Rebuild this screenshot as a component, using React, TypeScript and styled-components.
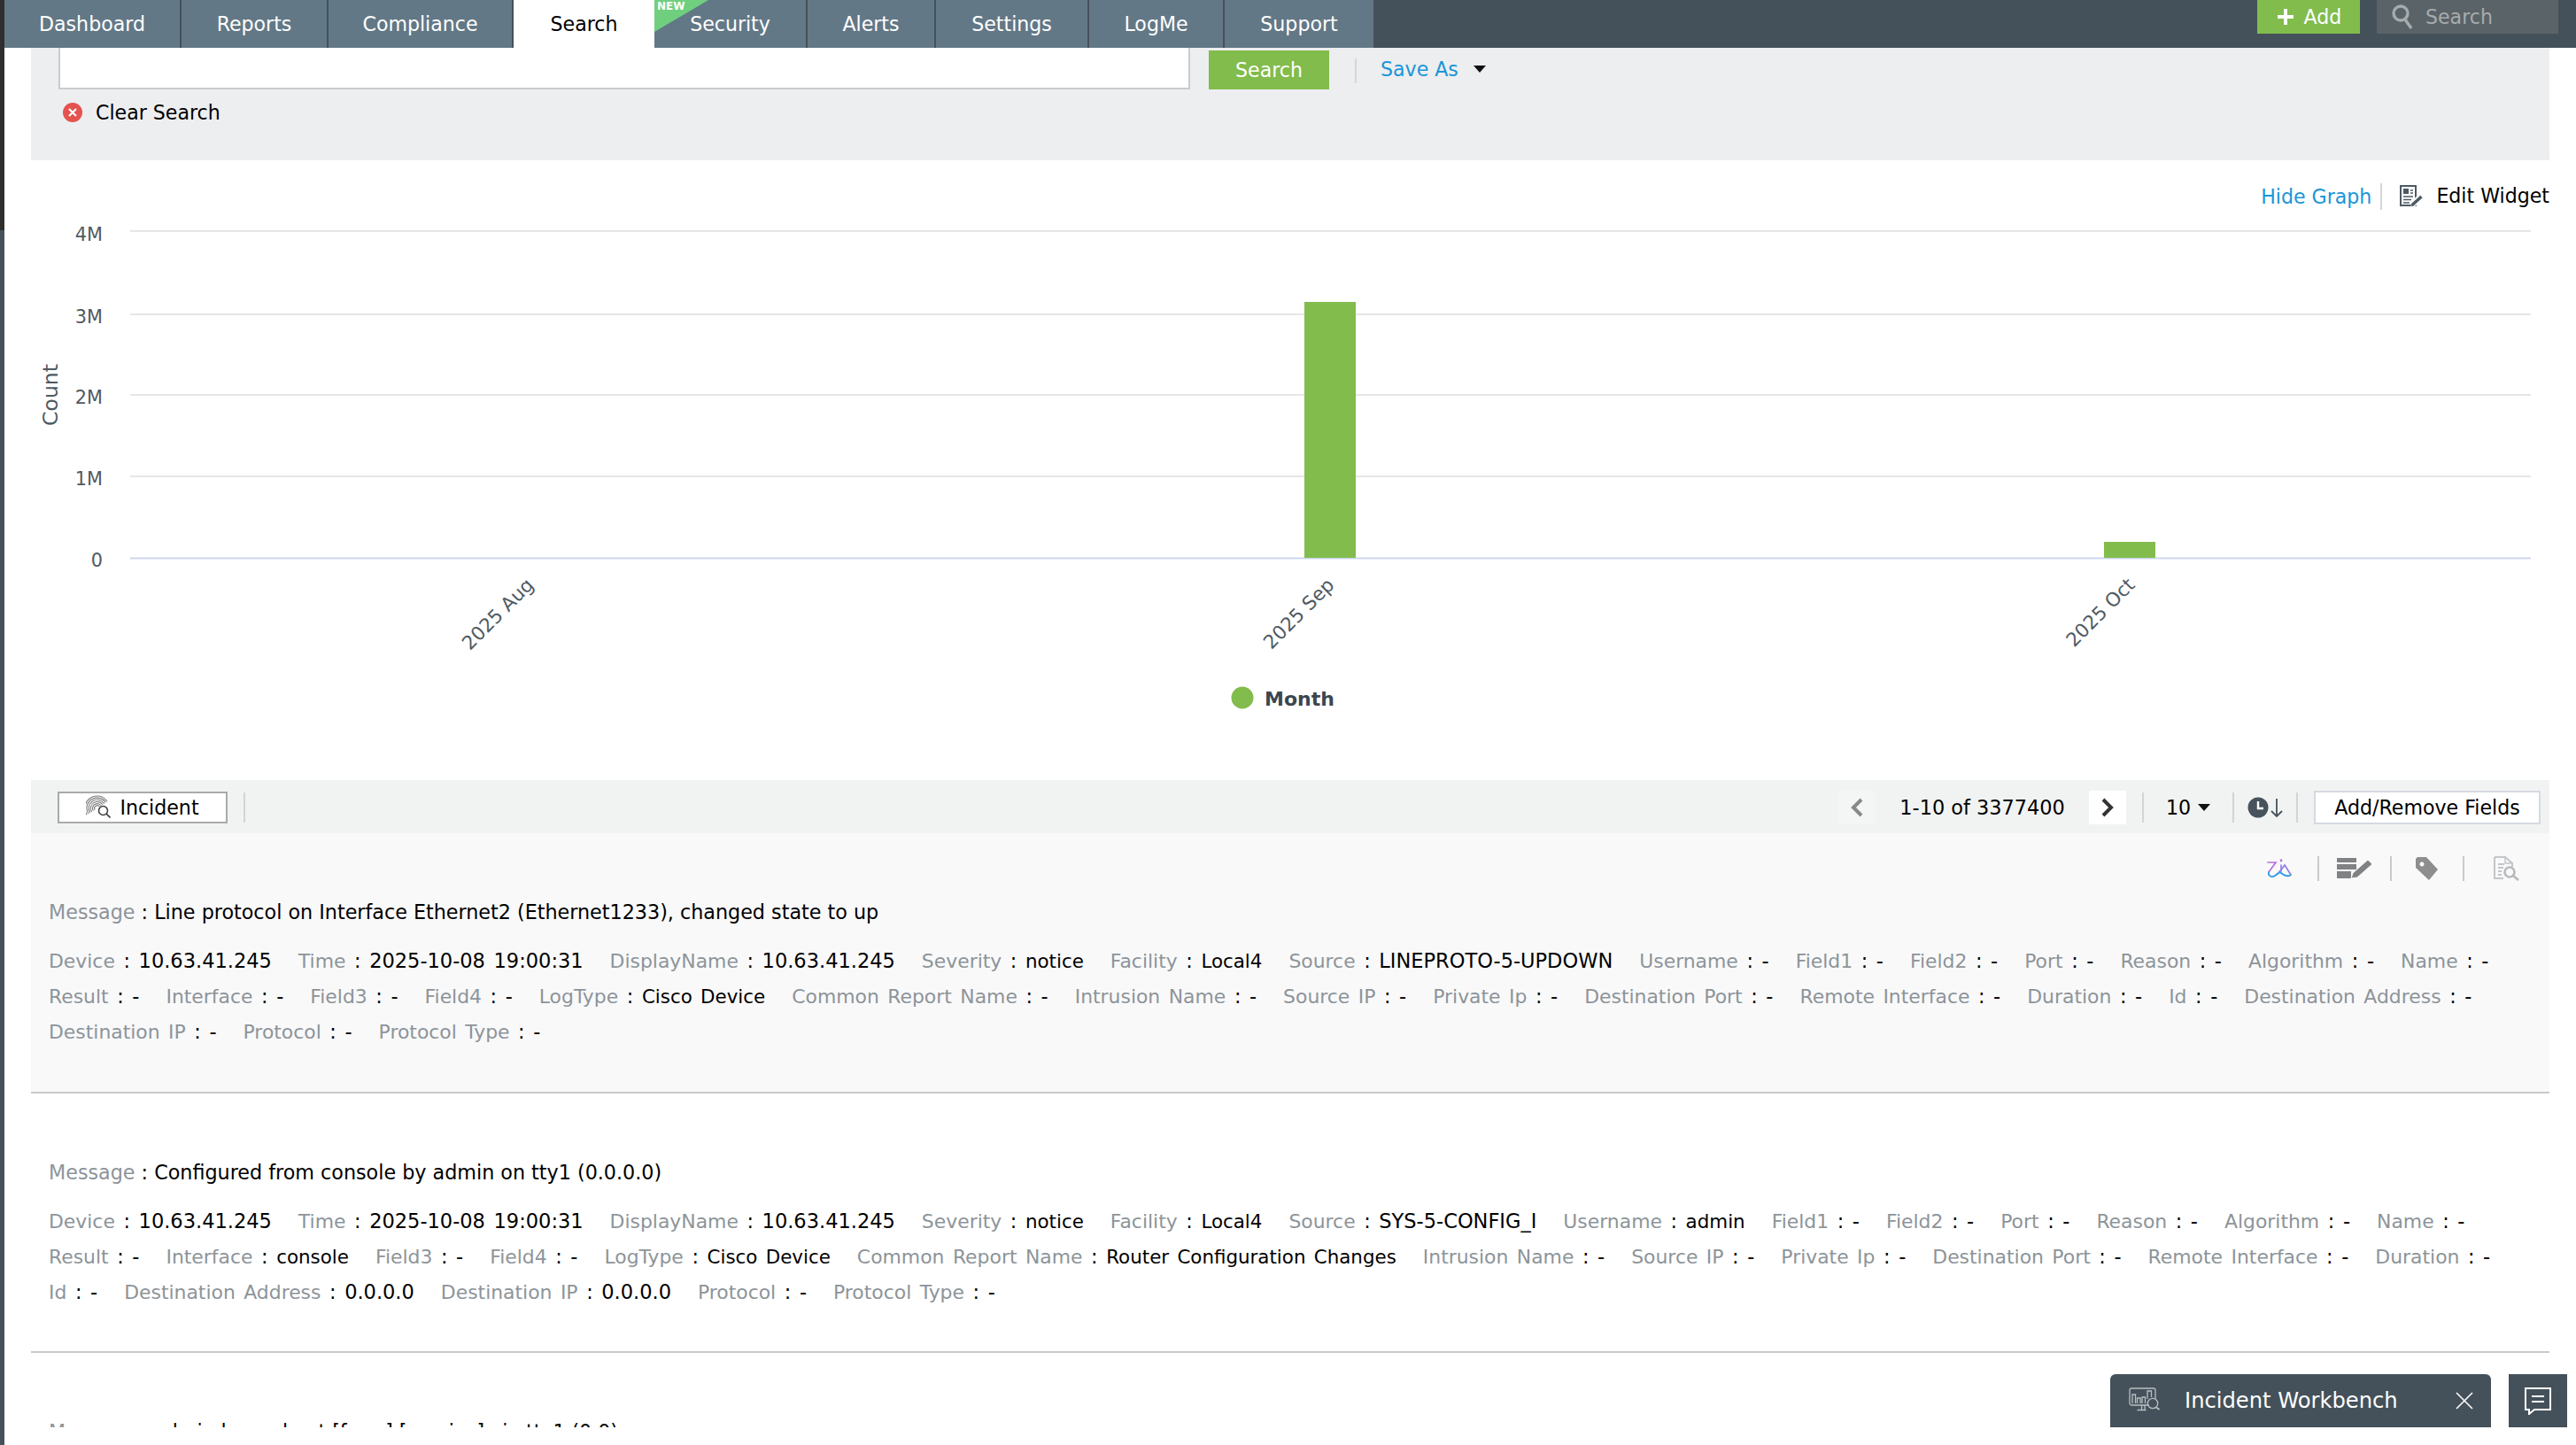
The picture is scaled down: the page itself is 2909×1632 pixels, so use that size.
import React from "react";
import styled, { createGlobalStyle } from "styled-components";

const uiFont = `"DejaVu Sans", "Liberation Sans", sans-serif`;

const GlobalStyle = createGlobalStyle`
  html, body {
    margin: 0;
    padding: 0;
    height: 100%;
    overflow: hidden;
    background: #ffffff;
  }
  body {
    font-family: ${uiFont};
    font-size: 22.1px;
    color: #000;
  }
`;

const tabs = [
  { name: "Dashboard", width: 200 },
  { name: "Reports", width: 166 },
  { name: "Compliance", width: 209 },
  { name: "Search", width: 159, active: true },
  { name: "Security", width: 173, isNew: true },
  { name: "Alerts", width: 145 },
  { name: "Settings", width: 173 },
  { name: "LogMe", width: 153 },
  { name: "Support", width: 170 },
];

type FieldData = [string, string];

const recordOne: { message: string; rows: FieldData[][] } = {
  message: "Line protocol on Interface Ethernet2 (Ethernet1233), changed state to up",
  rows: [
    [
      ["Device", "10.63.41.245"],
      ["Time", "2025-10-08 19:00:31"],
      ["DisplayName", "10.63.41.245"],
      ["Severity", "notice"],
      ["Facility", "Local4"],
      ["Source", "LINEPROTO-5-UPDOWN"],
      ["Username", "-"],
      ["Field1", "-"],
      ["Field2", "-"],
      ["Port", "-"],
      ["Reason", "-"],
      ["Algorithm", "-"],
      ["Name", "-"],
    ],
    [
      ["Result", "-"],
      ["Interface", "-"],
      ["Field3", "-"],
      ["Field4", "-"],
      ["LogType", "Cisco Device"],
      ["Common Report Name", "-"],
      ["Intrusion Name", "-"],
      ["Source IP", "-"],
      ["Private Ip", "-"],
      ["Destination Port", "-"],
      ["Remote Interface", "-"],
      ["Duration", "-"],
      ["Id", "-"],
      ["Destination Address", "-"],
    ],
    [
      ["Destination IP", "-"],
      ["Protocol", "-"],
      ["Protocol Type", "-"],
    ],
  ],
};

const recordTwo: { message: string; rows: FieldData[][] } = {
  message: "Configured from console by admin on tty1 (0.0.0.0)",
  rows: [
    [
      ["Device", "10.63.41.245"],
      ["Time", "2025-10-08 19:00:31"],
      ["DisplayName", "10.63.41.245"],
      ["Severity", "notice"],
      ["Facility", "Local4"],
      ["Source", "SYS-5-CONFIG_I"],
      ["Username", "admin"],
      ["Field1", "-"],
      ["Field2", "-"],
      ["Port", "-"],
      ["Reason", "-"],
      ["Algorithm", "-"],
      ["Name", "-"],
    ],
    [
      ["Result", "-"],
      ["Interface", "console"],
      ["Field3", "-"],
      ["Field4", "-"],
      ["LogType", "Cisco Device"],
      ["Common Report Name", "Router Configuration Changes"],
      ["Intrusion Name", "-"],
      ["Source IP", "-"],
      ["Private Ip", "-"],
      ["Destination Port", "-"],
      ["Remote Interface", "-"],
      ["Duration", "-"],
    ],
    [
      ["Id", "-"],
      ["Destination Address", "0.0.0.0"],
      ["Destination IP", "0.0.0.0"],
      ["Protocol", "-"],
      ["Protocol Type", "-"],
    ],
  ],
};

const FingerprintIcon = () => (
  <svg width="28" height="27" viewBox="0 0 28 27" fill="none">
    {[13, 11, 9, 7, 5, 3].map((r) => (
      <path
        key={r}
        d={`M${13 - r * 0.92} ${15 + r * 0.55}A${r} ${r} 0 0 1 ${13 + r * 0.85} ${15 - r * 0.6}`}
        stroke="#7a7a7a"
        strokeWidth="1.1"
      />
    ))}
    <circle cx="19.5" cy="17.5" r="5" fill="#fff" stroke="#3c3c3c" strokeWidth="1.5" />
    <path d="M23 21l4.5 4.5" stroke="#3c3c3c" strokeWidth="1.7" />
  </svg>
);

const EditWidgetIcon = () => (
  <svg width="27" height="25" viewBox="0 0 27 25" fill="none">
    <rect x="1" y="1" width="17" height="22" stroke="#4d5a63" strokeWidth="2" />
    <rect x="4" y="4" width="6" height="6" fill="#4d5a63" />
    <path d="M12 6h3M12 9h3M4 13h11M4 16.5h9M4 20h7" stroke="#4d5a63" strokeWidth="1.7" />
    <path d="M13 23l11-10" stroke="#fff" strokeWidth="7" />
    <path d="M13.5 23l11-10" stroke="#4d5a63" strokeWidth="3.6" />
  </svg>
);

const ClockIcon = () => (
  <ClockSlot>
    <svg width="40" height="26" viewBox="0 0 40 26">
      <circle cx="12" cy="13" r="11.5" fill="#47535c" />
      <path d="M12 6v8h6" fill="none" stroke="#fff" strokeWidth="2.4" />
      <path d="M33 3v20M27 17l6 6 6-6" fill="none" stroke="#47535c" strokeWidth="1.8" />
    </svg>
  </ClockSlot>
);

const ZiaIcon = () => (
  <svg width="29" height="22" viewBox="0 0 29 22" fill="none" strokeWidth="1.7" strokeLinecap="round">
    <path d="M1 4h9L2 15" stroke="#b56ee4" />
    <path d="M16 1.5v.6" stroke="#b56ee4" strokeWidth="2.6" />
    <path d="M16 7v7" stroke="#a07ce4" />
    <path d="M2 15c-1 3 2 6 5 5 5-2 9-7 13-13 2 3 5 8 7 11-3 3-7 1-11-2" stroke="#8a82e6" />
    <path d="M2 15c-1 3 2 6 5 5 3-1 5-3 8-5M27 18c-3 3-7 1-11-2" stroke="#2ea6e4" />
  </svg>
);

const NotesIcon = () => (
  <svg width="40" height="27" viewBox="0 0 40 27" fill="#808283">
    <rect x="0" y="1" width="22" height="5" />
    <rect x="0" y="8" width="22" height="6" />
    <rect x="0" y="16" width="16" height="8" />
    <path d="M16 24l2-6 17-15 5 5-17 15z" stroke="#f9f9fa" strokeWidth="1" />
  </svg>
);

const TagIcon = () => (
  <svg width="27" height="28" viewBox="0 0 27 28">
    <path
      fillRule="evenodd"
      fill="#8e8e8e"
      d="M3 1h10l13 14-10 12L1 13V3zM8 6.5a2.5 2.5 0 1 0 .01 0z"
    />
  </svg>
);

const DocSearchIcon = () => (
  <svg width="30" height="28" viewBox="0 0 30 28" fill="none" stroke="#c4c6c8" strokeWidth="2">
    <path d="M1 1h12l8 7v4M1 1v24h10" />
    <path d="M13 1v7h8" strokeWidth="1.4" />
    <path d="M5 9h7M5 13h6M5 17h4M5 21h4" />
    <circle cx="18" cy="18" r="5.5" stroke="#b8bbbe" strokeWidth="2.6" />
    <path d="M22 22l6 5" stroke="#b8bbbe" strokeWidth="2.8" />
  </svg>
);

const WorkbenchIcon = () => (
  <svg width="37" height="30" viewBox="0 0 37 30" fill="none" stroke="#b9bec2" strokeWidth="1.3">
    <path d="M23 20H3a2 2 0 0 1-2-2V3a2 2 0 0 1 2-2h25a2 2 0 0 1 2 2v10" />
    <path d="M4 18V8h3.5v10M9.5 18v-6H13v6M15 18v-7h3.5v7M21 13V4h4.5v7" />
    <path d="M14.5 20v5M18 20v5M9.5 25.5h10" />
    <circle cx="27" cy="18" r="5.7" />
    <path d="M31 22.5l3.5 2.5" strokeWidth="2" />
  </svg>
);

const ChatIcon = () => (
  <svg width="30" height="31" viewBox="0 0 30 31" fill="none" stroke="#fff" strokeWidth="2">
    <path d="M1 1h28v24H11l-6 5v-5H1z" />
    <path d="M8 10h14M8 16h14" strokeWidth="2.2" />
  </svg>
);

const Chart = () => (
  <ChartSvg viewBox="5 240 2874 641">
    {[261, 355, 446, 538].map((y) => (
      <line key={y} x1="147" x2="2858" y1={y} y2={y} stroke="#e6e6e6" strokeWidth="2" />
    ))}
    <line x1="147" x2="2858" y1="630.5" y2="630.5" stroke="#ccd6eb" strokeWidth="2" />
    {[
      ["4M", 272],
      ["3M", 365],
      ["2M", 456],
      ["1M", 548],
      ["0", 640],
    ].map(([t, y]) => (
      <AxisText key={t} x="116" y={y} textAnchor="end">
        {t}
      </AxisText>
    ))}
    <CountText transform="translate(65 446) rotate(-90)" textAnchor="middle">
      Count
    </CountText>
    <rect x="1473" y="341" width="58" height="289" fill="#82bc4c" />
    <rect x="2376" y="612" width="58" height="18" fill="#82bc4c" />
    <AxisLabel transform="translate(604 662) rotate(-45)" textAnchor="end">
      2025 Aug
    </AxisLabel>
    <AxisLabel transform="translate(1508 662) rotate(-45)" textAnchor="end">
      2025 Sep
    </AxisLabel>
    <AxisLabel transform="translate(2412 662) rotate(-45)" textAnchor="end">
      2025 Oct
    </AxisLabel>
    <circle cx="1403" cy="788" r="12.5" fill="#82bc4c" />
    <LegendText x="1428" y="797">
      Month
    </LegendText>
  </ChartSvg>
);

const Record = ({ data, shaded }: { data: typeof recordOne; shaded?: boolean }) => (
  <RecordBox $shaded={shaded}>
    {shaded && (
      <RecordTools>
        <ZiaIcon />
        <ToolDivider $before={28} $after={20} />
        <NotesIcon />
        <ToolDivider $before={20} $after={26} />
        <TagIcon />
        <ToolDivider $before={27} $after={33} />
        <DocSearchIcon />
      </RecordTools>
    )}
    <MessageLine>
      <Label>Message</Label> : {data.message}
    </MessageLine>
    {data.rows.map((row, i) => (
      <FieldRow key={i}>
        {row.map(([k, v]) => (
          <span key={k}>
            <FieldLabel>{k}</FieldLabel> : <FieldValue $words={/[a-z]/.test(v)}>{v}</FieldValue>
          </span>
        ))}
      </FieldRow>
    ))}
  </RecordBox>
);

const App = () => {
  return (
    <Shell>
      <GlobalStyle />
      <LeftStrip />
      <Main>
        <TopBar>
          {tabs.map((t) => (
            <Tab key={t.name} $width={t.width} $active={t.active}>
              {t.isNew && (
                <NewBadge>
                  <NewText>NEW</NewText>
                </NewBadge>
              )}
              {t.name}
            </Tab>
          ))}
          <TopRight>
            <AddButton>
              <svg width="18" height="18" viewBox="0 0 18 18" stroke="#fff" strokeWidth="4">
                <path d="M9 0v18M0 9h18" />
              </svg>
              Add
            </AddButton>
            <TopSearch>
              <svg width="26" height="28" viewBox="0 0 26 28" fill="none" stroke="#a6abae" strokeWidth="3.4">
                <circle cx="11" cy="10" r="8" />
                <path d="M16 17l7 10" />
              </svg>
              Search
            </TopSearch>
          </TopRight>
        </TopBar>

        <Page>
          <SearchPanel>
            <SearchRow>
              <SearchInput />
              <SearchButton>Search</SearchButton>
              <SaveAs>
                Save As <Caret />
              </SaveAs>
            </SearchRow>
            <ClearRow>
              <ClearIcon>
                <svg width="12" height="12" viewBox="0 0 12 12" stroke="#fff" strokeWidth="2.2">
                  <path d="M2 2l8 8M10 2l-8 8" />
                </svg>
              </ClearIcon>
              Clear Search
            </ClearRow>
          </SearchPanel>

          <ChartSection>
            <ChartTools>
              <HideGraph>Hide Graph</HideGraph>
              <EditWidget>
                <EditWidgetIcon />
                Edit Widget
              </EditWidget>
            </ChartTools>
            <Chart />
          </ChartSection>

          <Toolbar>
            <IncidentButton>
              <FingerprintIcon />
              Incident
            </IncidentButton>
            <BarDivider />
            <Pager>
              <PagerButton $disabled>
                <svg width="14" height="22" viewBox="0 0 14 22" fill="none" stroke="#888" strokeWidth="4">
                  <path d="M12 2L3 11l9 9" />
                </svg>
              </PagerButton>
              <PageInfo>1-10 of 3377400</PageInfo>
              <PagerButton>
                <svg width="14" height="22" viewBox="0 0 14 22" fill="none" stroke="#333" strokeWidth="4">
                  <path d="M2 2l9 9-9 9" />
                </svg>
              </PagerButton>
              <BarDivider />
              <PageSize>
                10 <Caret />
              </PageSize>
              <BarDivider />
              <ClockIcon />
              <BarDivider />
              <FieldsButton>Add/Remove Fields</FieldsButton>
            </Pager>
          </Toolbar>

          <Record data={recordOne} shaded />
          <Record data={recordTwo} />
          <NextMessage>
            <Label>Message</Label> : admin logged out [from] [service] via tty1 (0.0)
          </NextMessage>
        </Page>

        <Dock>
          <Workbench>
            <WorkbenchIcon />
            <WorkbenchTitle>Incident Workbench</WorkbenchTitle>
            <svg width="20" height="20" viewBox="0 0 20 20" stroke="#fff" strokeWidth="1.6">
              <path d="M1 1l18 18M19 1L1 19" />
            </svg>
          </Workbench>
          <ChatButton>
            <ChatIcon />
          </ChatButton>
        </Dock>
      </Main>
    </Shell>
  );
};

export default App;

const Shell = styled.div`
  display: flex;
  width: 2909px;
  height: 1632px;
  overflow: hidden;
  background: #fff;
`;
const LeftStrip = styled.div`
  width: 5px;
  flex-shrink: 0;
  background: linear-gradient(#2e2e2e 0 260px, #44515a 260px);
`;
const Main = styled.div`
  position: relative;
  flex: 1;
  min-width: 0;
  display: flex;
  flex-direction: column;
`;
const TopBar = styled.div`
  height: 54px;
  flex-shrink: 0;
  display: flex;
  background: #44515a;
`;
const Tab = styled.div<{ $width: number; $active?: boolean }>`
  position: relative;
  width: ${(p) => p.$width}px;
  box-sizing: border-box;
  display: flex;
  align-items: center;
  justify-content: center;
  color: ${(p) => (p.$active ? "#000" : "#fff")};
  background: ${(p) => (p.$active ? "#fff" : "#637886")};
  border-right: ${(p) => (p.$active ? "none" : "2px solid #44515a")};
`;
const NewBadge = styled.span`
  position: absolute;
  left: 0;
  top: 0;
  width: 61px;
  height: 36px;
  background: #6fcf7f;
  clip-path: polygon(0 0, 100% 0, 0 100%);
`;
const NewText = styled.span`
  position: absolute;
  left: 3px;
  top: 0;
  font-size: 12px;
  line-height: 15px;
  font-weight: bold;
  color: #fff;
`;
const TopRight = styled.div`
  margin-left: auto;
  margin-right: 20px;
  display: flex;
  gap: 19px;
`;
const AddButton = styled.div`
  width: 116px;
  height: 38px;
  padding-left: 2px;
  box-sizing: border-box;
  display: flex;
  align-items: center;
  justify-content: center;
  gap: 12px;
  background: #82bc4c;
  color: #fff;
`;
const TopSearch = styled.div`
  width: 205px;
  height: 38px;
  padding-left: 16px;
  box-sizing: border-box;
  display: flex;
  align-items: center;
  gap: 13px;
  background: #5a6367;
  color: #a6abae;
`;
const Page = styled.div`
  height: 1558px;
  overflow: hidden;
`;
const SearchPanel = styled.div`
  margin-left: 30px;
  width: 2844px;
  height: 127px;
  background: #edeef0;
`;
const SearchRow = styled.div`
  display: flex;
  align-items: flex-start;
  padding-left: 31px;
`;
const SearchInput = styled.div`
  width: 1278px;
  height: 47px;
  box-sizing: border-box;
  background: #fff;
  border: 2px solid #c8ccd0;
  border-top: none;
`;
const SearchButton = styled.div`
  width: 136px;
  height: 44px;
  margin: 3px 0 0 21px;
  display: flex;
  align-items: center;
  justify-content: center;
  background: #82bc4c;
  color: #fff;
`;
const SaveAs = styled.div`
  margin: 12px 0 0 29px;
  padding: 0 0 5px 27px;
  height: 28px;
  box-sizing: border-box;
  border-left: 2px solid #d4d6d8;
  color: #1a96d8;
  display: flex;
  align-items: center;
  gap: 17px;
`;
const Caret = styled.span`
  display: inline-block;
  width: 0;
  height: 0;
  border-left: 7px solid transparent;
  border-right: 7px solid transparent;
  border-top: 8px solid #111;
`;
const ClearRow = styled.div`
  margin: 13px 0 0 36px;
  display: flex;
  align-items: center;
  gap: 15px;
`;
const ClearIcon = styled.span`
  width: 22px;
  height: 22px;
  border-radius: 50%;
  background: #e4534f;
  display: flex;
  align-items: center;
  justify-content: center;
`;
const ChartSection = styled.div`
  height: 700px;
  display: flex;
  flex-direction: column;
`;
const ChartTools = styled.div`
  height: 59px;
  flex-shrink: 0;
  box-sizing: border-box;
  padding: 26px 30px 0 0;
  display: flex;
  justify-content: flex-end;
  align-items: flex-start;
`;
const HideGraph = styled.div`
  height: 30px;
  line-height: 30px;
  padding-right: 10px;
  border-right: 2px solid #d4d6d8;
  color: #1a96d8;
`;
const EditWidget = styled.div`
  margin-left: 20px;
  height: 28px;
  display: flex;
  align-items: center;
  gap: 14px;
`;
const ChartSvg = styled.svg`
  display: block;
  width: 2874px;
  height: 641px;
`;
const AxisText = styled.text`
  font-family: ${uiFont};
  font-size: 20.8px;
  fill: #4f5a62;
`;
const AxisLabel = styled(AxisText)`
  font-size: 21.5px;
`;
const CountText = styled.text`
  font-family: ${uiFont};
  font-size: 23.5px;
  fill: #4f5a62;
`;
const LegendText = styled.text`
  font-family: ${uiFont};
  font-size: 22px;
  font-weight: bold;
  fill: #3c4650;
`;
const Toolbar = styled.div`
  margin-left: 30px;
  width: 2844px;
  height: 60px;
  box-sizing: border-box;
  padding: 1px 10px 0 30px;
  display: flex;
  align-items: center;
  background: #f1f3f3;
`;
const IncidentButton = styled.div`
  width: 192px;
  height: 36px;
  box-sizing: border-box;
  border: 2px solid #aaaaaa;
  background: #fff;
  display: flex;
  align-items: center;
  justify-content: center;
  gap: 10px;
`;
const BarDivider = styled.span`
  width: 2px;
  height: 34px;
  margin: 0 18px;
  background: #d2d4d6;
`;
const Pager = styled.div`
  margin-left: auto;
  display: flex;
  align-items: center;
`;
const PagerButton = styled.div<{ $disabled?: boolean }>`
  width: 42px;
  height: 38px;
  display: flex;
  align-items: center;
  justify-content: center;
  background: ${(p) => (p.$disabled ? "#f4f5f5" : "#fff")};
`;
const PageInfo = styled.div`
  width: 241px;
  text-align: center;
  font-size: 22.4px;
`;
const PageSize = styled.div`
  width: 64px;
  box-sizing: border-box;
  padding-left: 7px;
  display: flex;
  align-items: center;
  gap: 8px;
`;
const ClockSlot = styled.span`
  display: flex;
  margin: 0 -3px;
`;
const FieldsButton = styled.div`
  width: 256px;
  height: 38px;
  box-sizing: border-box;
  border: 2px solid #d5d9e0;
  background: #fff;
  display: flex;
  align-items: center;
  justify-content: center;
`;
const RecordBox = styled.div<{ $shaded?: boolean }>`
  position: relative;
  margin-left: 30px;
  width: 2844px;
  height: ${(p) => (p.$shaded ? "294px" : "293px")};
  box-sizing: border-box;
  padding-left: 20px;
  background: ${(p) => (p.$shaded ? "#f9f9fa" : "#fff")};
  border-bottom: 2px solid #c8cacc;
`;
const RecordTools = styled.div`
  position: absolute;
  top: 26px;
  right: 33px;
  display: flex;
  align-items: center;
`;
const ToolDivider = styled.span<{ $before: number; $after: number }>`
  width: 2px;
  height: 28px;
  margin: 0 ${(p) => p.$after}px 0 ${(p) => p.$before}px;
  background: #c8cacc;
`;
const MessageLine = styled.div`
  padding-top: 74px;
  height: 30px;
  line-height: 30px;
  margin-bottom: 20px;
  font-size: 22.25px;
`;
const FieldRow = styled.div`
  display: flex;
  gap: 30px;
  height: 40px;
  line-height: 40px;
  font-size: 22.3px;
  word-spacing: 2.5px;
  white-space: nowrap;
`;
const Label = styled.span`
  color: #8d9499;
`;
const FieldLabel = styled(Label)`
  font-size: 21.9px;
`;
const FieldValue = styled.span<{ $words?: boolean }>`
  font-size: ${(p) => (p.$words ? "21.4px" : "22.5px")};
`;
const NextMessage = styled.div`
  margin: 74px 0 0 50px;
  line-height: 30px;
  white-space: nowrap;
`;
const Dock = styled.div`
  position: absolute;
  left: 2378px;
  top: 1552px;
  display: flex;
  gap: 20px;
`;
const Workbench = styled.div`
  width: 430px;
  height: 60px;
  box-sizing: border-box;
  padding: 0 20px 0 21px;
  border-radius: 6px 6px 0 0;
  display: flex;
  align-items: center;
  background: #44515a;
  color: #fff;
`;
const WorkbenchTitle = styled.span`
  margin-left: 26px;
  flex: 1;
  font-size: 24.2px;
`;
const ChatButton = styled.div`
  width: 66px;
  height: 60px;
  display: flex;
  align-items: center;
  justify-content: center;
  background: #44515a;
`;
